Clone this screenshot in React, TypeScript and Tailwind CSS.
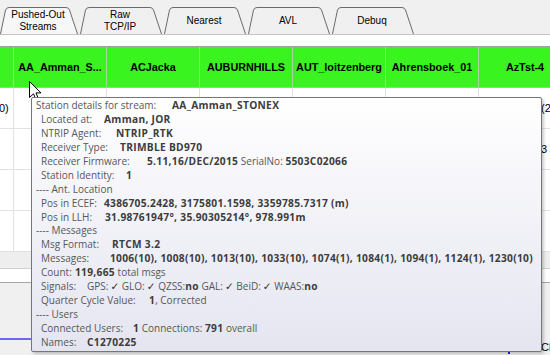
import React from 'react';

const TABS = [
  { w: 78, lines: ['Pushed-Out', 'Streams'], active: true },
  { w: 82, lines: ['Raw', 'TCP/IP'] },
  { w: 82, lines: ['Nearest'] },
  { w: 82, lines: ['AVL'] },
  { w: 82, lines: ['Debuq'] },
];

const COLS = ['', 'AA_Amman_S...', 'ACJacka', 'AUBURNHILLS', 'AUT_loitzenberg', 'Ahrensboek_01', 'AzTst-4'];

function Tab({ w, lines, active }: { w: number; lines: string[]; active?: boolean }) {
  return (
    <div className="relative h-[27px] flex-none" style={{ width: w }}>
      <svg className="absolute inset-0" width={w} height={27} viewBox={`0 0 ${w} 27`}>
        <path
          d={`M0.5 27 L5.5 3 Q6.5 0.5 9 0.5 L${w - 12} 0.5 Q${w - 9.5} 0.5 ${w - 8.5} 3 L${w - 0.5} 27`}
          fill={active ? '#f7f7f7' : '#f0f0f0'}
          stroke="#6b6b6b"
          strokeWidth="1"
        />
      </svg>
      <div className="relative flex h-full flex-col items-center justify-center pr-[2px] pt-[1px] text-[10px] leading-[12px] text-black">
        {lines.map((l) => (
          <span key={l}>{l}</span>
        ))}
      </div>
    </div>
  );
}

function B({ children }: { children: React.ReactNode }) {
  return <span className="text-[10.2px] font-bold tracking-[0.3px] text-[#3c3c3c]">{children}</span>;
}

// label column width is where the value starts in the tooltip
function Line({ label, w, indent = true, children }: { label: string; w?: number; indent?: boolean; children?: React.ReactNode }) {
  return (
    <div className={`flex whitespace-pre ${indent ? 'pl-[5px]' : ''}`}>
      <span className="flex-none" style={w ? { width: w } : undefined}>
        {label}
      </span>
      {children !== undefined && <span>{children}</span>}
    </div>
  );
}

const Tick = () => <span className="ml-[2px] font-['DejaVu_Sans'] text-[10.5px] text-[#2a2a2a]">✓</span>;

function Cursor() {
  return (
    <svg width="13" height="21" viewBox="0 0 13 21" className="absolute left-[29px] top-[81px]">
      <path d="M0.5 0.5 L0.5 16.5 L4.5 12.8 L7.2 19.2 L9.6 18.2 L7 11.9 L12 11.9 Z" fill="#fff" stroke="#000" strokeWidth="1" />
    </svg>
  );
}

export default function App() {
  return (
    <div className="relative h-[355px] w-[550px] overflow-hidden bg-[#f0f0f0] font-['Liberation_Sans',Arial,sans-serif]">
      {/* tab strip */}
      <div className="flex h-[34px] items-end gap-[2px] pl-0">
        {TABS.map((t) => (
          <Tab key={t.lines.join()} {...t} />
        ))}
      </div>
      <div className="h-[13px] border-t border-b border-t-[#c4c4c4] border-b-[#a0a0a0] bg-white" />

      {/* stream table */}
      <div className="w-[640px]">
        <div className="flex h-[41px] border-b border-[#b8b8b8] bg-[#3af41f]">
          {COLS.map((c, i) => (
            <div
              key={i}
              className={`flex flex-none items-center justify-center border-r border-[#a6d89c] text-[10.8px] font-bold text-black ${i === 0 ? 'w-[14px]' : 'w-[93px]'}`}
            >
              {c}
            </div>
          ))}
        </div>
        {[0, 1, 2, 3].map((r) => (
          <div key={r} className="flex h-[41px] border-b border-[#e2e2e2] bg-white text-[11px] text-black">
            {COLS.map((_, i) => (
              <div key={i} className={`flex flex-none items-center border-r border-[#e2e2e2] ${i === 0 ? 'w-[14px]' : 'w-[93px]'}`}>
                {i === 0 && r === 0 && <span className="-ml-[1px] whitespace-nowrap">0)</span>}
                {i === 6 && r === 0 && <span className="pl-[62px]">(2</span>}
                {i === 6 && r === 1 && <span className="pl-[62px]">3</span>}
              </div>
            ))}
          </div>
        ))}
      </div>
      <div className="h-[17px] border-b border-[#d0d0d0] bg-[#eeeeee]" />
      <div className="h-[14px] border-b border-[#a8a8a8] bg-white" />
      <div className="relative h-[71px]">
        <div className="absolute left-0 top-[55px] h-[2px] w-[300px] bg-[#6a6af0]" />
        <div className="absolute left-[508px] top-[65px] h-[6px] w-[2px] bg-[#2020d0]" />
        <span className="absolute left-[541px] top-[56px] text-[11px] text-black">Cl</span>
      </div>

      <Cursor />

      {/* tooltip */}
      <div className="absolute left-[31px] top-[97px] h-[255px] w-[511px] rounded-[2px] border border-[#767676] bg-gradient-to-b from-white to-[#e4e5f0] pl-[4px] pt-[1px] font-['Open_Sans','DejaVu_Sans',sans-serif] text-[10px] leading-[13.94px] text-[#575757] shadow-[2px_2px_3px_rgba(0,0,0,0.2)]">
        <Line label="Station details for stream:" w={136} indent={false}>
          <B>AA_Amman_STONEX</B>
        </Line>
        <Line label="Located at:" w={63}>
          <B>Amman, JOR</B>
        </Line>
        <Line label="NTRIP Agent:" w={75}>
          <B>NTRIP_RTK</B>
        </Line>
        <Line label="Receiver Type:" w={79}>
          <B>TRIMBLE BD970</B>
        </Line>
        <Line label="Receiver Firmware:" w={106}>
          <B>5.11,16/DEC/2015</B> SerialNo: <B>5503C02066</B>
        </Line>
        <Line label="Station Identity:" w={85}>
          <B>1</B>
        </Line>
        <Line label="---- Ant. Location" indent={false} />
        <Line label="Pos in ECEF:" w={63}>
          <B>4386705.2428, 3175801.1598, 3359785.7317 (m)</B>
        </Line>
        <Line label="Pos in LLH:" w={64}>
          <B>31.98761947°, 35.90305214°, 978.991m</B>
        </Line>
        <Line label="---- Messages" indent={false} />
        <Line label="Msg Format:" w={71}>
          <B>RTCM 3.2</B>
        </Line>
        <Line label="Messages:" w={69}>
          <B>1006(10), 1008(10), 1013(10), 1033(10), 1074(1), 1084(1), 1094(1), 1124(1), 1230(10)</B>
        </Line>
        <Line label="Count:" w={34}>
          <B>119,665</B> total msgs
        </Line>
        <Line label="Signals:" w={46}>
          GPS:<Tick /> GLO:<Tick /> QZSS:<B>no</B> GAL:<Tick /> BeiD:<Tick /> WAAS:<B>no</B>
        </Line>
        <Line label="Quarter Cycle Value:" w={108}>
          <B>1</B>, Corrected
        </Line>
        <Line label="---- Users" indent={false} />
        <Line label="Connected Users:" w={92}>
          <B>1</B> Connections: <B>791</B> overall
        </Line>
        <Line label="Names:" w={46}>
          <B>C1270225</B>
        </Line>
      </div>
    </div>
  );
}
